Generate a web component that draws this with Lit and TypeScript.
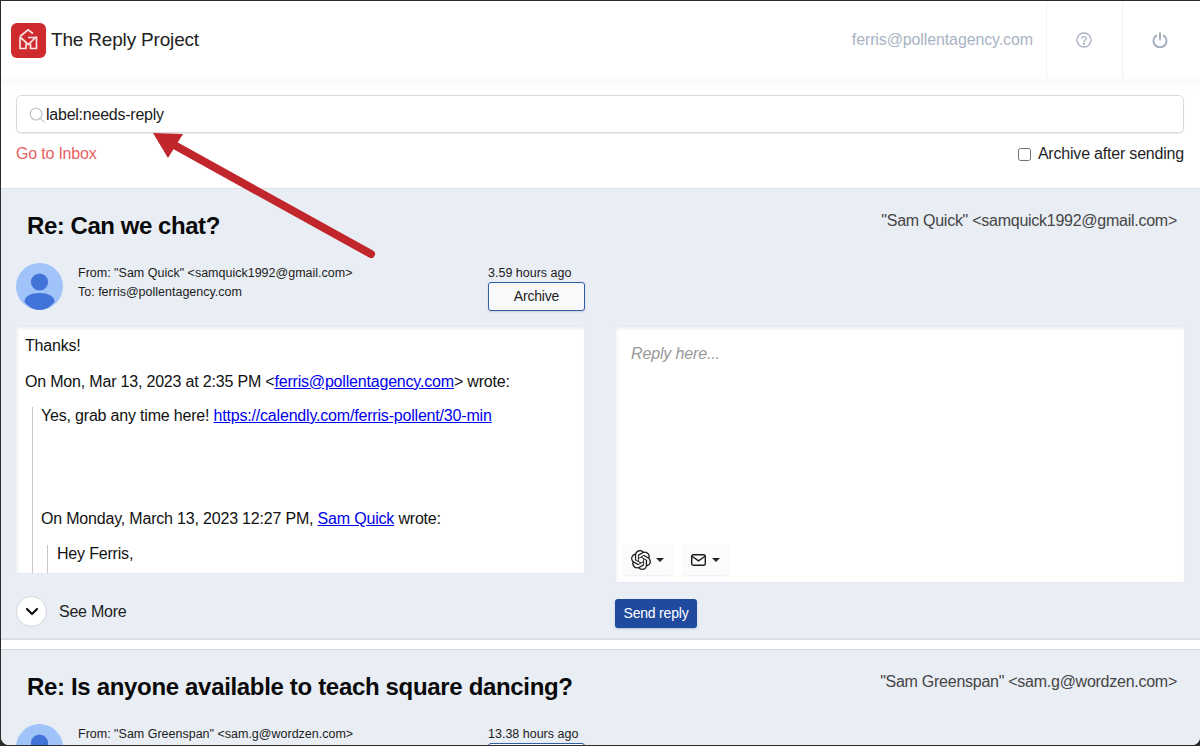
import { LitElement, html, css } from "lit";
import { customElement } from "lit/decorators.js";

const avatar = html`<svg class="avatar" viewBox="0 0 47 47"><circle cx="23.5" cy="23.5" r="23.5" fill="#a0c3f9"/><circle cx="23.5" cy="19" r="8.6" fill="#4273d9"/><path d="M8.5 39C8.5 33 15 30 23.5 30S38.5 33 38.5 39C34.5 44 29 47 23.5 47S12.5 44 8.5 39Z" fill="#4273d9"/></svg>`;

const knot =
  "M22.2819 9.8211a5.9847 5.9847 0 0 0-.5157-4.9108 6.0462 6.0462 0 0 0-6.5098-2.9A6.0651 6.0651 0 0 0 4.9807 4.1818a5.9847 5.9847 0 0 0-3.9977 2.9 6.0462 6.0462 0 0 0 .7427 7.0966 5.98 5.98 0 0 0 .511 4.9107 6.051 6.051 0 0 0 6.5146 2.9001A5.9847 5.9847 0 0 0 13.2599 24a6.0557 6.0557 0 0 0 5.7718-4.2058 5.9894 5.9894 0 0 0 3.9977-2.9001 6.0557 6.0557 0 0 0-.7475-7.0729zm-9.022 12.6081a4.4755 4.4755 0 0 1-2.8764-1.0408l.1419-.0804 4.7783-2.7582a.7948.7948 0 0 0 .3927-.6813v-6.7369l2.02 1.1686a.071.071 0 0 1 .038.052v5.5826a4.504 4.504 0 0 1-4.4945 4.4944zm-9.6607-4.1254a4.4708 4.4708 0 0 1-.5346-3.0137l.142.0852 4.783 2.7582a.7712.7712 0 0 0 .7806 0l5.8428-3.3685v2.3324a.0804.0804 0 0 1-.0332.0615L9.74 19.9502a4.4992 4.4992 0 0 1-6.1408-1.6464zM2.3408 7.8956a4.485 4.485 0 0 1 2.3655-1.9728V11.6a.7664.7664 0 0 0 .3879.6765l5.8144 3.3543-2.0201 1.1685a.0757.0757 0 0 1-.071 0l-4.8303-2.7865A4.504 4.504 0 0 1 2.3408 7.872zm16.5963 3.8558L13.1038 8.364 15.1192 7.2a.0757.0757 0 0 1 .071 0l4.8303 2.7913a4.4944 4.4944 0 0 1-.6765 8.1042v-5.6772a.79.79 0 0 0-.407-.667zm2.0107-3.0231l-.142-.0852-4.7735-2.7818a.7759.7759 0 0 0-.7854 0L9.409 9.2297V6.8974a.0662.0662 0 0 1 .0284-.0615l4.8303-2.7866a4.4992 4.4992 0 0 1 6.6802 4.66zM8.3065 12.863l-2.02-1.1638a.0804.0804 0 0 1-.038-.0567V6.0742a4.4992 4.4992 0 0 1 7.3757-3.4537l-.142.0805L8.704 5.459a.7948.7948 0 0 0-.3927.6813zm1.0976-2.3654l2.602-1.4998 2.6069 1.4998v2.9994l-2.5974 1.4997-2.6067-1.4997Z";

@customElement("app-root")
class AppRoot extends LitElement {
  static styles = css`
    :host {
      display: block; position: relative; width: 1200px; height: 746px; overflow: hidden;
      background: #2b2b2b; font-family: "Liberation Sans", Arial, sans-serif; color: #111;
    }
    * { box-sizing: border-box; }
    .frame {
      position: absolute; inset: 1px 0 0 1px; background: #fff; overflow: hidden;
      border-radius: 0 0 8px 8px; height: 744px; display: flex; flex-direction: column;
    }
    .header { height: 78px; display: flex; align-items: center; flex: none; padding-left: 10px; }
    .logo { width: 35px; height: 35px; flex: none; margin-right: 5px; }
    .brand { font-size: 19px; letter-spacing: -0.18px; color: #222; flex: 1; }
    .email { font-size: 16px; letter-spacing: -0.12px; color: #a9b3c4; margin-right: 13px; }
    .hbtn {
      width: 76px; height: 78px; border-left: 1px solid #f1f2f5; display: flex; align-items: center;
      justify-content: center; flex: none; padding-right: 2px;
    }
    .hbtn.last { width: 78px; padding-right: 4px; }
    .search {
      flex: none; height: 110px; padding: 16px 16px 0 15px; background: linear-gradient(#fafafa, #fff 12px);
      border-bottom: 1px solid #dcdfe4;
    }
    .input {
      height: 38px; border: 1px solid #d8dade; border-radius: 5px; background: #fff; display: flex; align-items: center;
      padding: 1px 0 0 12px; box-shadow: 0 1px 1px #eceef1; font-size: 16px; letter-spacing: -0.24px; color: #1c1c1c; gap: 1px;
    }
    .below { display: flex; justify-content: space-between; align-items: center; height: 36px; margin-top: 3px; font-size: 16px; letter-spacing: -0.2px; }
    .goto { color: #e8605f; }
    .check { display: flex; align-items: center; color: #1f1f1f; }
    .box { width: 13px; height: 13px; border: 1px solid #6f6f6f; border-radius: 2.5px; background: #fff; margin-right: 7px; }
    .msg { flex: none; background: #e9edf4; padding: 0 15px; }
    .msg.first { height: 451px; border-bottom: 2px solid #dcdfe4; }
    .gap { height: 10px; flex: none; background: #fff; border-bottom: 1px solid #d3d7dd; }
    .msg.second { flex: 1; }
    .msg-head { display: flex; justify-content: space-between; height: 74px; padding: 23px 8px 0 11px; }
    .subject { margin: 0; font-size: 24px; letter-spacing: -0.33px; line-height: 28px; font-weight: 700; color: #0a0a0a; }
    .first .subject { letter-spacing: -0.45px; }
    .sender { font-size: 16px; letter-spacing: -0.26px; line-height: 20px; color: #454545; margin-top: -1px; }
    .meta { display: flex; height: 64px; }
    .avatar { width: 47px; height: 47px; flex: none; margin-right: 15px; }
    .who { width: 410px; flex: none; font-size: 12.5px; line-height: 19px; color: #1c1c1c; padding-top: 1px; }
    .side { width: 97px; flex: none; font-size: 12.5px; line-height: 19px; color: #1c1c1c; padding-top: 1px; }
    .archive {
      height: 29px; margin-top: -1px; border: 1px solid #2f5fa8; border-radius: 3px; background: #f8f9fb; text-align: center;
      font-size: 14px; letter-spacing: -0.2px; line-height: 27px; color: #222; box-shadow: 0 1px 2px #c9d1de;
    }
    .cols { display: flex; gap: 31px; align-items: flex-start; }
    .left { width: 568px; flex: none; }
    .right { width: 569px; flex: none; }
    .mail {
      height: 246px; background: #fff; overflow: hidden; padding: 10px 10px 0 9px; font-size: 16px; letter-spacing: -0.19px; line-height: 18px;
      box-shadow: inset 0 3px 3px -1px #eff0f2, inset 3px 0 3px -1px #eff0f2, 0 0 2px #e2e6ed; color: #111;
    }
    .mail p { margin: 0 0 17px; }
    .mail p.thanks { margin-bottom: 18px; }
    .mail p.on { margin-bottom: 16px; }
    .mail a { color: #0000ee; text-decoration: underline; }
    .quote { border-left: 1px solid #c6c6c6; padding-left: 8px; margin-left: 7px; }
    .quote p.yes { margin-bottom: 85px; }
    .quote.inner { height: 60px; padding-left: 9px; margin-left: 6px; }
    .more { display: flex; align-items: center; margin-top: 23px; font-size: 16px; letter-spacing: -0.25px; color: #222; gap: 12px; }
    .circle {
      width: 31px; height: 31px; border-radius: 50%; background: #fff; border: 1px solid #d3d6dc;
      display: flex; align-items: center; justify-content: center;
    }
    .reply {
      height: 255px; background: #fff; padding: 18px 16px 0; display: flex; flex-direction: column;
      box-shadow: inset 0 3px 3px -1px #eff0f2, inset 3px 0 3px -1px #eff0f2, 0 0 2px #e2e6ed;
      font-size: 16px; letter-spacing: -0.15px; font-style: italic; color: #999;
    }
    .ph { flex: 1; line-height: 18px; }
    .tools { display: flex; gap: 10px; margin-left: -8px; margin-bottom: 7px; font-style: normal; }
    .tool {
      height: 30px; background: #fbfbfb; box-shadow: 0 1px 2px #eceef1; border-radius: 2px; display: flex; align-items: center;
      padding: 0 9px 0 8px; gap: 5px;
    }
    .tool.mailer { gap: 6px; }
    .caret { width: 0; height: 0; border-left: 4px solid transparent; border-right: 4px solid transparent; border-top: 4px solid #222; }
    .send {
      display: inline-block; margin-top: 17px; height: 29px; width: 82px; background: #1f4a9e; color: #fff; border-radius: 3px;
      font-size: 14px; letter-spacing: -0.2px; line-height: 29px; text-align: center; box-shadow: 0 1px 2px #b5c3dc;
    }
    .arrow { position: absolute; left: 0; top: 0; width: 1200px; height: 746px; pointer-events: none; }
  `;

  render() {
    return html`
      <div class="frame">
        <div class="header">
          <svg class="logo" viewBox="0 0 35 35">
            <rect width="35" height="35" rx="6" fill="#cf2b2f"/>
            <g fill="none" stroke="#f8e2e2" stroke-width="1.7" stroke-linejoin="miter">
              <path d="M9 13.5 17 6.8l5 3.7"/>
              <path d="M9 14v11.5h6v-5"/>
              <path d="M9 14l8.3 7.5 7.7-7.5"/>
              <path d="M25.5 13.5v12h-6v-5"/>
              <path d="M17 14.5h8.5"/>
            </g>
          </svg>
          <div class="brand">The Reply Project</div>
          <div class="email">ferris@pollentagency.com</div>
          <div class="hbtn">
            <svg width="16" height="16" viewBox="0 0 16 16" fill="none" stroke="#a7b1c2" stroke-width="1.3"><circle cx="8" cy="8" r="7"/><path d="M5.9 6.2A2.2 2.2 0 0 1 8 4.6c1.3 0 2.2.8 2.2 1.9 0 1.5-2.2 1.6-2.2 3.2" stroke-linecap="round"/><circle cx="8" cy="11.8" r=".5" fill="#a7b1c2"/></svg>
          </div>
          <div class="hbtn last">
            <svg width="16" height="16" viewBox="0 0 16 16" fill="none" stroke="#a7b1c2" stroke-width="2" stroke-linecap="round"><path d="M4.2 3.6a6.5 6.5 0 1 0 7.6 0"/><path d="M8 1.2v6.4"/></svg>
          </div>
        </div>

        <div class="search">
          <div class="input">
            <svg width="16" height="16" viewBox="0 0 18 18" fill="none" stroke="#b9bec7" stroke-width="1.3"><circle cx="8" cy="8" r="6.6"/><path d="M12.8 12.8 17 17" stroke-linecap="round"/></svg>
            <span>label:needs-reply</span>
          </div>
          <div class="below">
            <span class="goto">Go to Inbox</span>
            <span class="check"><span class="box"></span>Archive after sending</span>
          </div>
        </div>

        <div class="msg first">
          <div class="msg-head">
            <h2 class="subject">Re: Can we chat?</h2>
            <div class="sender">"Sam Quick" &lt;samquick1992@gmail.com&gt;</div>
          </div>
          <div class="meta">
            ${avatar}
            <div class="who">From: "Sam Quick" &lt;samquick1992@gmail.com&gt;<br />To: ferris@pollentagency.com</div>
            <div class="side">3.59 hours ago<div class="archive">Archive</div></div>
          </div>
          <div class="cols">
            <div class="left">
              <div class="mail">
                <p class="thanks">Thanks!</p>
                <p class="on">On Mon, Mar 13, 2023 at 2:35 PM &lt;<a>ferris@pollentagency.com</a>&gt; wrote:</p>
                <div class="quote">
                  <p class="yes">Yes, grab any time here! <a>https://calendly.com/ferris-pollent/30-min</a></p>
                  <p>On Monday, March 13, 2023 12:27 PM, <a>Sam Quick</a> wrote:</p>
                  <div class="quote inner"><p>Hey Ferris,</p></div>
                </div>
              </div>
              <div class="more">
                <span class="circle"><svg width="14" height="9" viewBox="0 0 14 9" fill="none" stroke="#111" stroke-width="2.2" stroke-linecap="round" stroke-linejoin="round"><path d="M2 2 7 7 12 2"/></svg></span>
                See More
              </div>
            </div>
            <div class="right">
              <div class="reply">
                <div class="ph">Reply here...</div>
                <div class="tools">
                  <span class="tool"><svg width="20" height="20" viewBox="0 0 24 24"><path d=${knot} fill="#1c1c1c"/></svg><span class="caret"></span></span>
                  <span class="tool mailer"><svg width="15" height="12" viewBox="0 0 15 12" fill="none" stroke="#1c1c1c" stroke-width="1.4"><rect x=".7" y=".7" width="13.6" height="10.6" rx="1.6"/><path d="M1 2.2 7.5 6.8 14 2.2"/></svg><span class="caret"></span></span>
                </div>
              </div>
              <span class="send">Send reply</span>
            </div>
          </div>
        </div>
        <div class="gap"></div>

        <div class="msg second">
          <div class="msg-head">
            <h2 class="subject">Re: Is anyone available to teach square dancing?</h2>
            <div class="sender">"Sam Greenspan" &lt;sam.g@wordzen.com&gt;</div>
          </div>
          <div class="meta">
            ${avatar}
            <div class="who">From: "Sam Greenspan" &lt;sam.g@wordzen.com&gt;</div>
            <div class="side">13.38 hours ago<div class="archive"></div></div>
          </div>
        </div>
      </div>
      <svg class="arrow" viewBox="0 0 1200 746">
        <path d="M371 254 176 146" stroke="#c0262c" stroke-width="8" stroke-linecap="round" fill="none"/>
        <path d="M153 133 183 134 168 158Z" fill="#c0262c"/>
      </svg>
    `;
  }
}
